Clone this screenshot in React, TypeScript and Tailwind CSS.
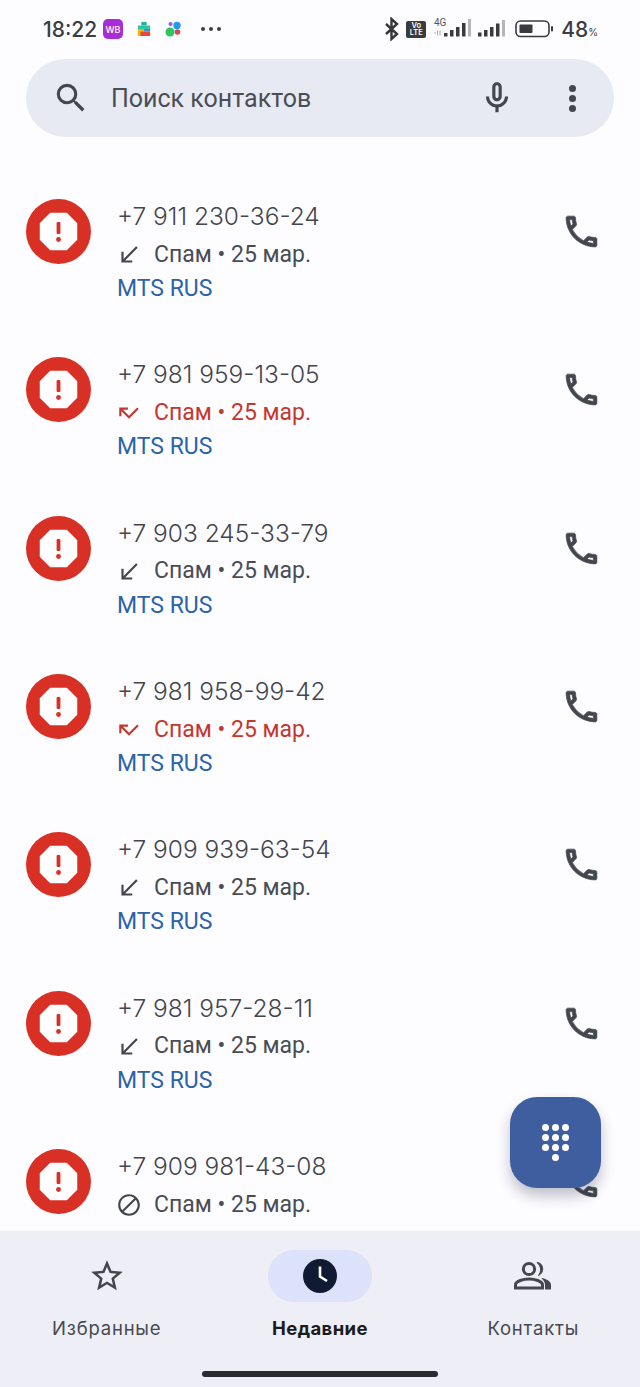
const PHONE = "M20 15.5c-1.25 0-2.45-.2-3.57-.57a1.02 1.02 0 0 0-1.02.24l-2.2 2.2a15.045 15.045 0 0 1-6.59-6.59l2.2-2.21a.96.96 0 0 0 .25-1A11.36 11.36 0 0 1 8.5 4c0-.55-.45-1-1-1H4c-.55 0-1 .45-1 1 0 9.39 7.61 17 17 17 .55 0 1-.45 1-1v-3.5c0-.55-.45-1-1-1zM5.03 5h1.5c.07.88.22 1.75.45 2.58l-1.2 1.21c-.4-1.21-.66-2.47-.75-3.79zM19 18.97c-1.32-.09-2.6-.35-3.8-.76l1.2-1.2c.85.24 1.72.39 2.6.45v1.51z";

type Kind = "in" | "missed" | "blocked";
const rows: { num: string; kind: Kind; sim?: boolean }[] = [
  { num: "+7 911 230-36-24", kind: "in", sim: true },
  { num: "+7 981 959-13-05", kind: "missed", sim: true },
  { num: "+7 903 245-33-79", kind: "in", sim: true },
  { num: "+7 981 958-99-42", kind: "missed", sim: true },
  { num: "+7 909 939-63-54", kind: "in", sim: true },
  { num: "+7 981 957-28-11", kind: "in", sim: true },
  { num: "+7 909 981-43-08", kind: "blocked" },
];

function SpamAvatar() {
  return (
    <svg width="65" height="65" viewBox="0 0 65 65" className="shrink-0">
      <circle cx="32.5" cy="32.5" r="32.5" fill="#d93025" />
      <polygon points="24.5,14.5 40.5,14.5 50.5,24.5 50.5,40.5 40.5,50.5 24.5,50.5 14.5,40.5 14.5,24.5" fill="#fffdfd" stroke="#fffdfd" strokeWidth="1.5" strokeLinejoin="round" />
      <rect x="30.6" y="23" width="3.8" height="12" rx="1" fill="#d93025" />
      <circle cx="32.5" cy="40.5" r="2.4" fill="#d93025" />
    </svg>
  );
}

function CallIcon({ kind }: { kind: Kind }) {
  if (kind === "in")
    return (
      <svg width="26" height="26" viewBox="0 0 24 24" fill="#44464e" className="shrink-0">
        <path d="M20 5.41L18.59 4 7 15.59V9H5v10h10v-2H8.41z" />
      </svg>
    );
  if (kind === "missed")
    return (
      <svg width="26" height="26" viewBox="0 0 24 24" fill="#c5372e" className="shrink-0">
        <path d="M19.59 7L12 14.59 6.41 9H11V7H3v8h2v-4.59l7 7 9-9z" />
      </svg>
    );
  return (
    <svg width="26" height="26" viewBox="0 0 24 24" fill="#44464e" className="shrink-0">
      <path d="M12 2C6.48 2 2 6.48 2 12s4.48 10 10 10 10-4.48 10-10S17.52 2 12 2zM4 12c0-4.42 3.58-8 8-8 1.85 0 3.55.63 4.9 1.69L5.69 16.9A7.902 7.902 0 0 1 4 12zm8 8c-1.85 0-3.55-.63-4.9-1.69L18.31 7.1A7.902 7.902 0 0 1 20 12c0 4.42-3.58 8-8 8z" />
    </svg>
  );
}

function Row({ num, kind, sim }: { num: string; kind: Kind; sim?: boolean }) {
  return (
    <div className="h-[158.33px] shrink-0 flex pl-[26px] pr-[38px] items-start">
      <SpamAvatar />
      <div className="flex-1 ml-[26px] flex flex-col font-['Roboto',sans-serif]">
        <div className="h-[36px] leading-[34px] text-[24.5px] font-['Inter',sans-serif] font-[350] text-[#44464d]">{num}</div>
        <div className={`h-[40px] flex items-center text-[23px] ${kind === "missed" ? "text-[#c5372e]" : "text-[#4a4c54]"}`}>
          <div className="w-[36px] -ml-[1px] mr-[2px] flex"><CallIcon kind={kind} /></div>
          <span>Спам • 25 мар.</span>
        </div>
        {sim && <div className="h-[30px] leading-[28px] text-[23px] text-[#2b64a9]">MTS RUS</div>}
      </div>
      <svg width="41" height="41" viewBox="0 0 24 24" fill="#44464e" stroke="#44464e" strokeWidth="0.4" className="shrink-0 mt-[12px]">
        <path d={PHONE} />
      </svg>
    </div>
  );
}

function StatusBar() {
  return (
    <div className="h-[59px] shrink-0 flex items-center pl-[43px] pr-[42px] pb-[1px] font-['Inter',sans-serif] text-[#3c3d41]">
      <span className="text-[21px] font-medium leading-none w-[56px]">18:22</span>
      <div className="ml-[4px] w-[20px] h-[20px] rounded-[5px] bg-[#a92dd6] flex items-center justify-center text-white text-[9px] font-medium leading-none">WB</div>
      <svg width="14" height="18" viewBox="0 0 16 18" className="ml-[14px]">
        <path d="M5 1h6v4H5z" fill="#21b39a" />
        <path d="M1 5h14v4H1z" fill="#2ec4a6" />
        <path d="M1 9h7v8H1z" fill="#f2b705" />
        <path d="M8 9h7v3H8z" fill="#4a86e8" />
        <path d="M4 12h11v5H4z" fill="#e8453c" />
      </svg>
      <svg width="18" height="16" viewBox="0 0 18 16" className="ml-[14px]">
        <circle cx="5" cy="11" r="4.5" fill="#2fc462" />
        <circle cx="12" cy="4.5" r="3.7" fill="#1c9df0" />
        <circle cx="12.5" cy="11" r="2.8" fill="#e0474c" />
        <circle cx="5.5" cy="3" r="2" fill="#8a5cf0" />
      </svg>
      <div className="ml-[18px] flex gap-[4px]">
        <div className="w-[4px] h-[4px] rounded-full bg-[#3c3d41]" />
        <div className="w-[4px] h-[4px] rounded-full bg-[#3c3d41]" />
        <div className="w-[4px] h-[4px] rounded-full bg-[#3c3d41]" />
      </div>
      <div className="flex-1" />
      <svg width="16" height="24" viewBox="0 0 16 24" fill="none" stroke="#35363a" strokeWidth="2.4">
        <path d="M2 7l11 10-5.5 5V2L13 7 2 17" />
      </svg>
      <div className="ml-[6px] w-[20px] h-[17px] rounded-[2px] bg-[#3a3b3f] flex flex-col items-center justify-center text-white text-[7.5px] leading-[7.5px] font-semibold">
        <span>Vo</span>
        <span>LTE</span>
      </div>
      <svg width="39" height="22" viewBox="0 0 39 22" className="ml-[7px]">
        <text x="1" y="8" fontSize="10" fontFamily="Roboto, sans-serif" fill="#55565a">4G</text>
        <path d="M1 15h2M4.5 12.5v5M7 12.5v5" stroke="#aaa" strokeWidth="1" />
        <rect x="11" y="15" width="3.5" height="3.5" fill="#3a3b3f" />
        <rect x="17" y="12" width="3.5" height="6.5" fill="#3a3b3f" />
        <rect x="23" y="9" width="3.5" height="9.5" fill="#3a3b3f" />
        <rect x="29" y="5" width="3.5" height="13.5" fill="#3a3b3f" />
        <rect x="35" y="1" width="3" height="17.5" fill="#b4b5b8" />
      </svg>
      <svg width="29" height="18" viewBox="0 0 29 18" className="ml-[6px]">
        <rect x="0" y="12.5" width="3.5" height="4" fill="#3a3b3f" />
        <rect x="6" y="10" width="3.5" height="6.5" fill="#3a3b3f" />
        <rect x="12" y="7" width="3.5" height="9.5" fill="#3a3b3f" />
        <rect x="18" y="3.5" width="3.5" height="13" fill="#3a3b3f" />
        <rect x="24" y="0" width="3" height="16.5" fill="#b4b5b8" />
      </svg>
      <svg width="39" height="18" viewBox="0 0 39 18" className="ml-[8px]">
        <rect x="1" y="1" width="33" height="15.5" rx="4.5" fill="none" stroke="#3a3b3f" strokeWidth="1.6" />
        <rect x="4.5" y="4.5" width="13" height="8.5" rx="1" fill="#3a3b3f" />
        <rect x="36" y="6" width="2" height="5.5" rx="1" fill="#3a3b3f" />
      </svg>
      <span className="ml-[7px] text-[21px] font-medium leading-none">48</span>
      <span className="text-[10px] leading-none mt-[6px]">%</span>
    </div>
  );
}

function SearchBar() {
  return (
    <div className="h-[78px] shrink-0 mx-[26px] rounded-full bg-[#e8eaf3] flex items-center text-[#44464e]">
      <svg width="38" height="38" viewBox="0 0 24 24" fill="#44464e" className="ml-[26px] shrink-0">
        <path d="M15.5 14h-.79l-.28-.27A6.471 6.471 0 0 0 16 9.5 6.5 6.5 0 1 0 9.5 16c1.61 0 3.09-.59 4.23-1.57l.27.28v.79l5 4.99L20.49 19l-4.99-5zm-6 0C7.01 14 5 11.99 5 9.5S7.01 5 9.5 5 14 7.01 14 9.5 11.99 14 9.5 14z" />
      </svg>
      <span className="ml-[21px] flex-1 text-[25px] font-['Roboto',sans-serif] text-[#4b4d55] pt-[2px]">Поиск контактов</span>
      <svg width="38" height="38" viewBox="0 0 24 24" fill="#44464e" className="shrink-0 mr-[53px]">
        <path d="M12 14c1.66 0 3-1.34 3-3V5c0-1.66-1.34-3-3-3S9 3.34 9 5v6c0 1.66 1.34 3 3 3zm-1-9c0-.55.45-1 1-1s1 .45 1 1v6c0 .55-.45 1-1 1s-1-.45-1-1V5z" />
        <path d="M17 11c0 2.76-2.24 5-5 5s-5-2.24-5-5H5c0 3.53 2.61 6.43 6 6.92V21h2v-3.08c3.39-.49 6-3.39 6-6.92h-2z" />
      </svg>
      <div className="flex flex-col gap-[3px] mr-[38px]">
        <div className="w-[7px] h-[7px] rounded-full bg-[#44464e]" />
        <div className="w-[7px] h-[7px] rounded-full bg-[#44464e]" />
        <div className="w-[7px] h-[7px] rounded-full bg-[#44464e]" />
      </div>
    </div>
  );
}

function Fab() {
  const dots = [0, 1, 2, 3, 4, 5, 6, 7, 8];
  return (
    <div className="absolute left-[510px] top-[960px] w-[91px] h-[91px] rounded-[27px] bg-[#3f5e9f] shadow-[0_8px_14px_rgba(30,40,70,0.28)] flex flex-col items-center justify-center">
      <div className="grid grid-cols-3 gap-[3px]">
        {dots.map((d) => (
          <div key={d} className="w-[7px] h-[7px] rounded-full bg-white" />
        ))}
      </div>
      <div className="w-[7px] h-[7px] rounded-full bg-white mt-[3px]" />
    </div>
  );
}

function BottomNav() {
  return (
    <div className="h-[156px] shrink-0 bg-[#eeeef6] relative font-['Inter',sans-serif]">
      <div className="grid grid-cols-3 pt-[19px]">
        <div className="flex flex-col items-center">
          <div className="h-[52px] flex items-center justify-center">
            <svg width="38" height="38" viewBox="0 0 24 24" fill="#44464e">
              <path d="M22 9.24l-7.19-.62L12 2 9.19 8.63 2 9.24l5.46 4.73L5.82 21 12 17.27 18.18 21l-1.63-7.03L22 9.24zM12 15.4l-3.76 2.27 1-4.28-3.32-2.88 4.38-.38L12 6.1l1.71 4.04 4.38.38-3.32 2.88 1 4.28L12 15.4z" />
            </svg>
          </div>
          <span className="mt-[12px] text-[18.5px] tracking-[0.8px] leading-[28px] text-[#47494f]">Избранные</span>
        </div>
        <div className="flex flex-col items-center">
          <div className="w-[104px] h-[52px] rounded-full bg-[#dce2f9] flex items-center justify-center">
            <svg width="34" height="34" viewBox="0 0 34 34">
              <circle cx="17" cy="17" r="17" fill="#111a33" />
              <path d="M17 7.5V17.5L24 22" fill="none" stroke="#fff" strokeWidth="2.6" />
            </svg>
          </div>
          <span className="mt-[12px] text-[18.5px] tracking-[0.4px] leading-[28px] font-bold text-[#1a1b20]">Недавние</span>
        </div>
        <div className="flex flex-col items-center">
          <div className="h-[52px] flex items-center justify-center">
            <svg width="38" height="30" viewBox="0 0 38 30">
              <circle cx="15" cy="8" r="5.6" fill="none" stroke="#44464e" strokeWidth="3" />
              <path d="M1.5 27v-3c0-4 8-6 13.5-6s13.5 2 13.5 6v3z" fill="none" stroke="#44464e" strokeWidth="3" />
              <path d="M23 1.5c6.5 0 8 10 1.5 13 3-4 3-9-1.5-13z" fill="#44464e" stroke="#44464e" strokeWidth="1" />
              <path d="M27 17c5 .5 10 3 10 7v4.5h-6V24c0-3-2-5.5-4-7z" fill="#44464e" />
            </svg>
          </div>
          <span className="mt-[12px] text-[18.5px] tracking-[0.8px] leading-[28px] text-[#47494f]">Контакты</span>
        </div>
      </div>
      <div className="absolute left-[202px] bottom-[10px] w-[236px] h-[6px] rounded-full bg-[#2b2c30]" />
    </div>
  );
}

export default function App() {
  return (
    <div className="w-[640px] h-[1387px] flex flex-col bg-[#fdfcff] overflow-hidden">
      <StatusBar />
      <SearchBar />
      <div className="flex-1 min-h-0 relative overflow-hidden pt-[62px] flex flex-col">
        {rows.map((r) => (
          <Row key={r.num} {...r} />
        ))}
        <Fab />
      </div>
      <BottomNav />
    </div>
  );
}
